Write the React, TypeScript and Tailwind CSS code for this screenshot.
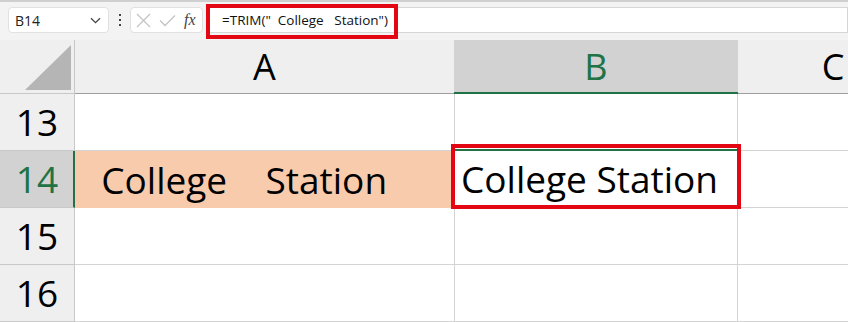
import React from "react";

const ui = { fontFamily: '"Open Sans", "Noto Sans", sans-serif' };
const cellFont = { fontFamily: '"Open Sans", "Noto Sans", sans-serif' };

function Toolbar() {
  return (
    <div className="relative flex h-[40px] items-start border-t-2 border-[#cfcfcf] bg-[#f3f3f3] pt-[5px] pl-[8px]" style={ui}>
      <div className="flex h-[26px] w-[101px] items-center justify-between rounded-[4px] border border-[#e1e1e1] bg-white pl-[6px] pr-[7px] text-[14px] text-[#222]">
        <span>B14</span>
        <svg width="11" height="7" viewBox="0 0 11 7" fill="none">
          <path d="M1 1.2 L5.5 5.6 L10 1.2" stroke="#444" strokeWidth="1.3" />
        </svg>
      </div>
      <div className="flex h-[26px] w-[21px] flex-col items-center justify-center gap-[3px]">
        <span className="block h-[2px] w-[2px] bg-[#444]" />
        <span className="block h-[2px] w-[2px] bg-[#444]" />
        <span className="block h-[2px] w-[2px] bg-[#444]" />
      </div>
      <div className="flex h-[26px] w-[73px] items-center rounded-[4px] border border-[#e1e1e1] bg-white pl-[5px]">
        <svg width="15" height="15" viewBox="0 0 15 15" fill="none">
          <path d="M1 1 L14 14 M14 1 L1 14" stroke="#c4c4c4" strokeWidth="1.3" />
        </svg>
        <svg className="ml-[8px]" width="17" height="13" viewBox="0 0 17 13" fill="none">
          <path d="M1 6.5 L6 11.5 L16 1.5" stroke="#c4c4c4" strokeWidth="1.3" />
        </svg>
        <span className="ml-[8px] text-[16px] italic text-[#444]" style={{ fontFamily: '"Liberation Serif", "DejaVu Serif", serif' }}>
          fx
        </span>
      </div>
      <div className="ml-[6px] flex h-[26px] flex-1 items-center border border-[#d6d6d6] bg-white pl-[12px] text-[13.5px] text-[#111] whitespace-pre">
        {'=TRIM("  College   Station")'}
      </div>
      <div className="pointer-events-none absolute left-[206px] top-[2px] h-[35px] w-[192px] border-[4px] border-[#e30613]" />
    </div>
  );
}

function App() {
  const rows = [13, 14, 15, 16];
  return (
    <div className="h-[322px] w-[848px] overflow-hidden bg-white">
      <Toolbar />
      <div className="flex h-[54px]">
        <div className="flex w-[75px] shrink-0 items-end justify-end border-r border-b border-[#c8c8c8] bg-[#efefef] pr-[3px] pb-[3px]">
          <svg width="46" height="45" viewBox="0 0 46 45">
            <polygon points="46,0 46,45 0,45" fill="#b5b5b5" />
          </svg>
        </div>
        <div className="flex w-[379px] shrink-0 items-center justify-center border-b border-[#9e9e9e] bg-[#efefef] text-[36px] text-black" style={cellFont}>
          A
        </div>
        <div className="flex w-[284px] shrink-0 items-center justify-center border-b-2 border-[#217346] bg-[#d2d2d2] pt-[2px] text-[36px] text-[#217346]" style={cellFont}>
          B
        </div>
        <div className="flex w-[190px] shrink-0 items-center justify-center border-b border-[#9e9e9e] bg-[#efefef] text-[36px] text-black" style={cellFont}>
          C
        </div>
      </div>
      {rows.map((r) => {
        const active = r === 14;
        return (
          <div key={r} className="flex h-[57px]">
            <div
              className={
                active
                  ? "flex w-[75px] shrink-0 items-center justify-center border-r-2 border-b border-r-[#217346] border-b-[#c8c8c8] bg-[#d2d2d2] pl-[1px] text-[37px] text-[#217346]"
                  : "flex w-[75px] shrink-0 items-center justify-center border-r border-b border-[#c8c8c8] bg-[#efefef] text-[37px] text-black"
              }
              style={cellFont}
            >
              {r}
            </div>
            <div
              className={
                active
                  ? "flex w-[380px] shrink-0 items-center bg-[#f8cbad] pl-[7px] text-[37px] text-black whitespace-pre"
                  : "w-[380px] shrink-0 border-r border-b border-[#d4d4d4]"
              }
              style={cellFont}
            >
              {active ? "  College    Station" : null}
            </div>
            <div
              className={
                active
                  ? "relative flex w-[283px] shrink-0 items-center border-r border-b border-[#d4d4d4] pl-[6px] text-[37px] text-black"
                  : "w-[283px] shrink-0 border-r border-b border-[#d4d4d4]"
              }
              style={cellFont}
            >
              {active ? (
                <>
                  <div className="pointer-events-none absolute left-[-2px] top-[-2px] h-[59px] w-[286px] border-2 border-[#217346]" />
                  <span className="relative">College Station</span>
                  <div className="pointer-events-none absolute left-[-4px] top-[-7px] h-[65px] w-[290px] border-[4px] border-[#e30613]" />
                </>
              ) : null}
            </div>
            <div className="flex-1 border-b border-[#d4d4d4]" />
          </div>
        );
      })}
    </div>
  );
}

export default App;
